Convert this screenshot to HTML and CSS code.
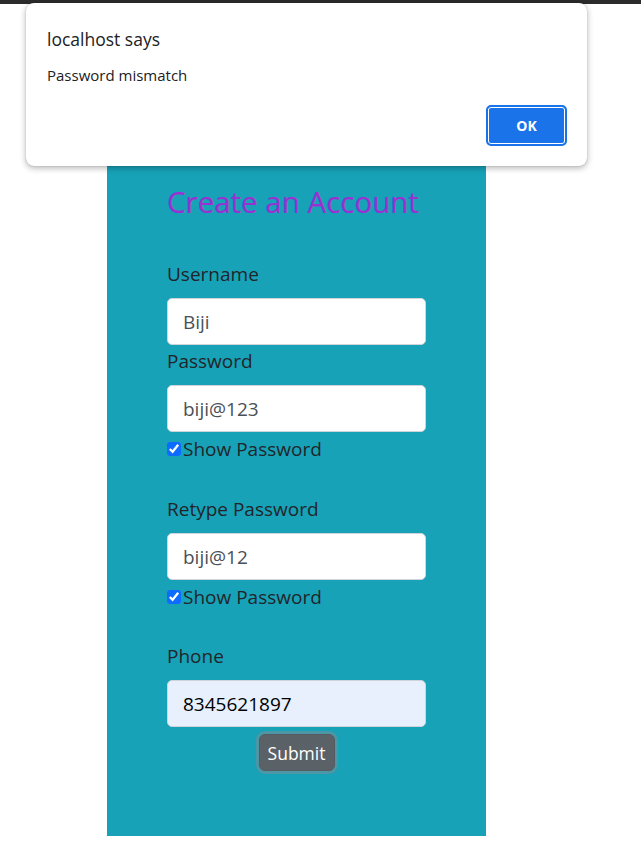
FILE: index.html
```html
<!DOCTYPE html>
<html>
<head>
<meta charset="utf-8">
<link rel="stylesheet" href="styles.css">
</head>
<body>
<div class="topbar"></div>
<main class="page">
  <section class="panel">
    <form class="form">
      <h2 class="title">Create an Account</h2>
      <label class="label">Username</label>
      <input class="field" type="text" value="Biji">
      <label class="label">Password</label>
      <input class="field" type="text" value="biji@123">
      <div class="check"><input type="checkbox" checked><span>Show Password</span></div>
      <div class="spacer"></div>
      <label class="label">Retype Password</label>
      <input class="field" type="text" value="biji@12">
      <div class="check"><input type="checkbox" checked><span>Show Password</span></div>
      <div class="spacer short"></div>
      <label class="label">Phone</label>
      <input class="field autofill" type="text" value="8345621897">
      <div class="actions"><button type="button" class="submit">Submit</button></div>
    </form>
  </section>
</main>
<div class="dialog">
  <div class="dialog-title">localhost says</div>
  <div class="dialog-msg">Password mismatch</div>
  <div class="dialog-actions"><button type="button" class="ok">OK</button></div>
</div>
</body>
</html>
```
FILE: styles.css
```css
html, body {
  margin: 0;
  padding: 0;
  background: #fff;
  font-family: "Open Sans", "Noto Sans", sans-serif;
}
.topbar {
  height: 4px;
  background: #2b2b2b;
}
.page {
  padding-left: 107px;
}
.panel {
  width: 379px;
  background: #17a2b8;
  margin-top: 36px;
  height: 796px;
  box-sizing: border-box;
  padding: 143px 60px 0;
}
.form {
  display: flex;
  flex-direction: column;
  width: 259px;
}
.title {
  margin: 0 0 38px;
  font-weight: 400;
  font-size: 29.5px;
  line-height: 38px;
  color: #9b30d2;
  white-space: nowrap;
  letter-spacing: 0;
  -webkit-text-stroke: 0.2px #9b30d2;
}
.label {
  font-size: 19px;
  line-height: 30px;
  color: #212529;
  margin-bottom: 9px;
}
.field {
  box-sizing: border-box;
  width: 259px;
  height: 47px;
  margin: 0 0 1px;
  padding: 0 15px;
  border: 1px solid #ced4da;
  border-radius: 5px;
  background: #fff;
  font-family: inherit;
  font-size: 19px;
  color: #495057;
}
.field.autofill {
  background: #e8f0fe;
  color: #000;
}
.check {
  display: flex;
  align-items: center;
  height: 30px;
  margin-top: 1px;
  font-size: 19px;
  color: #212529;
}
.check input {
  width: 14px;
  height: 14px;
  margin: 0 2px 0 0;
  accent-color: #0b6cff;
}
.spacer {
  height: 30px;
}
.spacer.short {
  height: 29px;
}
.actions {
  display: flex;
  justify-content: center;
  margin-top: 6px;
}
.submit {
  height: 37px;
  width: 76px;
  padding: 0;
  border: 1px solid #545b62;
  border-radius: 6px;
  background: #5a6268;
  color: #fff;
  font-family: inherit;
  font-size: 17.5px;
  box-shadow: 0 0 0 3px rgba(130, 138, 145, 0.5);
}
.dialog {
  position: absolute;
  left: 26px;
  top: 3px;
  width: 561px;
  height: 163px;
  box-sizing: border-box;
  background: #fff;
  border-radius: 8px;
  box-shadow: 0 2px 6px rgba(0, 0, 0, 0.3), 0 0 1px rgba(0, 0, 0, 0.3);
  padding: 24px 20px 0 21px;
  color: #202124;
}
.dialog-title {
  font-size: 17.5px;
  line-height: 24px;
}
.dialog-msg {
  font-size: 15px;
  line-height: 20px;
  margin-top: 14px;
}
.dialog-actions {
  display: flex;
  justify-content: flex-end;
  margin-top: 20px;
}
.ok {
  width: 81px;
  height: 41px;
  border: 2px solid #1a73e8;
  border-radius: 5px;
  background: #1a73e8;
  box-shadow: inset 0 0 0 1px #fff;
  color: #fff;
  font-family: inherit;
  font-weight: 700;
  font-size: 14px;
}
```
